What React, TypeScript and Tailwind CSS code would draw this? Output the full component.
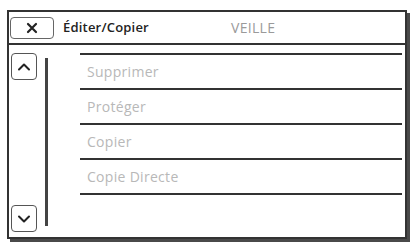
export default function App() {
  const rows = ["Supprimer", "Protéger", "Copier", "Copie Directe"];

  return (
    <div className="w-[412px] h-[243px] bg-white pt-[10px] pl-[7px]" style={{ fontFamily: '"Open Sans", "Noto Sans", sans-serif' }}>
      <div className="w-[400px] h-[229px] border-2 border-[#333] shadow-[3px_3px_0_#4a4a4a] flex flex-col bg-white">
        {/* header */}
        <div className="h-[33px] border-b-2 border-[#333] flex items-center shrink-0">
          <button className="ml-[1px] w-[44px] h-[22px] rounded-[4px] border-[1.5px] border-[#666] flex items-center justify-center">
            <svg width="12" height="12" viewBox="0 0 12 12">
              <path d="M2 2 L10 10 M10 2 L2 10" stroke="#222" strokeWidth="2.2" strokeLinecap="round" />
            </svg>
          </button>
          <span className="ml-[9px] w-[168px] text-[13px] font-semibold text-[#222] tracking-[0.2px]">Éditer/Copier</span>
          <span className="text-[14px] text-[#9a9a9a] tracking-[0.3px]">VEILLE</span>
        </div>

        {/* body */}
        <div className="flex-1 flex">
          <div className="ml-[2px] w-[26px] flex flex-col justify-between pt-[8px] pb-[5px]">
            <button className="w-[26px] h-[27px] rounded-[4px] border-[1.5px] border-[#555] flex items-center justify-center">
              <svg width="14" height="10" viewBox="0 0 14 10">
                <path d="M2 7.5 L7 2.5 L12 7.5" fill="none" stroke="#222" strokeWidth="2" strokeLinecap="round" strokeLinejoin="round" />
              </svg>
            </button>
            <button className="w-[26px] h-[27px] rounded-[4px] border-[1.5px] border-[#555] flex items-center justify-center">
              <svg width="14" height="10" viewBox="0 0 14 10">
                <path d="M2 2.5 L7 7.5 L12 2.5" fill="none" stroke="#222" strokeWidth="2" strokeLinecap="round" strokeLinejoin="round" />
              </svg>
            </button>
          </div>
          <div className="ml-[8px] mt-[13px] mb-[11px] w-[3px] bg-[#444]" />
          <div className="ml-[32px] mr-[3px] flex-1 pt-[8px]">
            <div className="border-t-2 border-[#333]">
              {rows.map((r) => (
                <div key={r} className="h-[35px] border-b-2 border-[#333] flex items-center pl-[7px] text-[14px] text-[#b8b8b8] tracking-[0.3px]">
                  {r}
                </div>
              ))}
            </div>
          </div>
        </div>
      </div>
    </div>
  );
}
